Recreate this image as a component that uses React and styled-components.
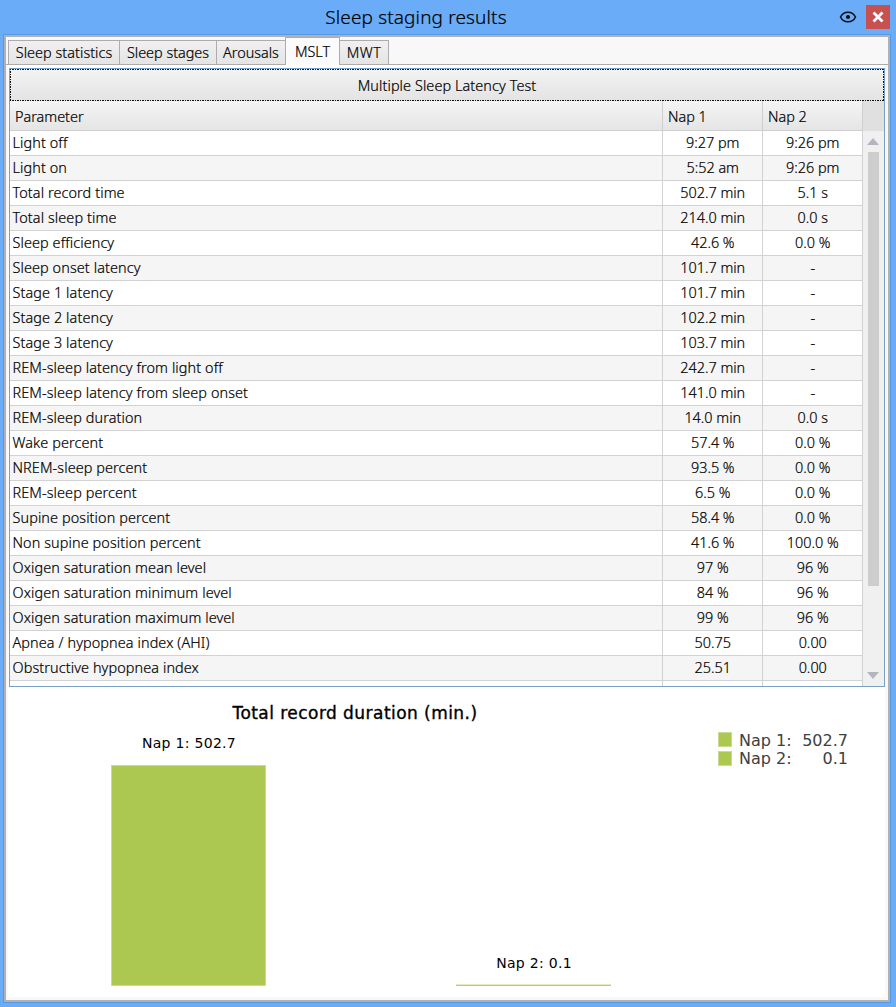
import React from 'react';
import styled, { createGlobalStyle } from 'styled-components';

const Global = createGlobalStyle`
  *, *::before, *::after { box-sizing: border-box; }
  html, body { margin: 0; padding: 0; }
  body { background: #6aacf7; overflow: hidden; }
`;

const Window = styled.div`
  width: 896px;
  height: 1007px;
  display: flex;
  flex-direction: column;
  padding: 0 5px 4px 3px;
  background: #6aacf7;
  color: #000;
  font: 300 14.4px/20px 'Noto Sans', 'Open Sans', sans-serif;
  letter-spacing: 0.13px;
  -webkit-text-stroke: 0.2px currentColor;
  white-space: nowrap;
`;

const TitleBar = styled.header`
  height: 34px;
  flex: none;
  display: flex;
  align-items: center;
`;

const Title = styled.h1`
  flex: 1;
  margin: 0;
  padding-right: 10px;
  text-align: center;
  font-size: 19px;
  font-weight: 300;
  line-height: 34px;
`;

const TitleActions = styled.div`
  display: flex;
  justify-content: flex-end;
  align-items: center;
  gap: 9px;
  padding: 0 1px 1px 0;
`;

const CloseButton = styled.button`
  width: 24px;
  height: 24px;
  padding: 0;
  border: 0;
  display: grid;
  place-items: center;
  background: #c75050;
`;

const Frame = styled.main`
  flex: 1;
  min-height: 0;
  display: flex;
  flex-direction: column;
  border: 1px solid #559ae4;
  box-shadow: inset 0 0 0 2px #b1b1b3;
  padding: 2px;
  background: #f8f8f8;
`;

const TabStrip = styled.nav`
  height: 28px;
  flex: none;
  display: flex;
  align-items: flex-end;
  padding-left: 2px;
  border-bottom: 1px solid #acacac;
`;

const Tab = styled.button`
  width: ${(p) => p.$w}px;
  height: ${(p) => (p.$active ? 29 : 24)}px;
  margin-bottom: ${(p) => (p.$active ? -2 : 0)}px;
  padding: 1px 0 ${(p) => (p.$active ? 2 : 0)}px;
  border: 1px solid #acacac;
  border-bottom: 0;
  border-left-width: ${(p) => (p.$joined ? 0 : 1)}px;
  border-right-width: ${(p) => (p.$open ? 0 : 1)}px;
  background: ${(p) => (p.$active ? '#fbfbfb' : 'linear-gradient(#f0f0f0, #e5e5e5)')};
  color: inherit;
  font: inherit;
  letter-spacing: ${(p) => p.$ls}px;
`;

const Page = styled.section`
  flex: 1;
  min-height: 0;
  display: flex;
  flex-direction: column;
  margin: 0 3px 3px 2px;
  padding-top: 3px;
  background: #fff;
`;

const Grid = styled.div`
  width: 876px;
  height: 619px;
  flex: none;
  margin-left: 1px;
  display: flex;
  flex-direction: column;
  border: 1px solid #7a9fc4;
`;

const dots = (angle) =>
  `repeating-linear-gradient(${angle}, #111 0 1.25px, transparent 1.25px 2.5px)`;

const TestButton = styled.button`
  height: 32px;
  flex: none;
  padding: 2px 0 0;
  border: 0;
  outline: 0;
  background:
    ${dots('90deg')} 0 0 / 100% 1px no-repeat,
    ${dots('90deg')} 0 100% / 100% 1px no-repeat,
    ${dots('180deg')} 0 0 / 1px 100% no-repeat,
    ${dots('180deg')} 100% 0 / 1px 100% no-repeat,
    linear-gradient(#f3f3f3, #e3e3e3);
  color: inherit;
  font: inherit;
  letter-spacing: 0.1px;
`;

const GridBody = styled.div`
  flex: 1;
  min-height: 0;
  display: flex;
`;

const Columns = styled.div`
  width: 853px;
  height: 100%;
  overflow: hidden;
`;

const HeaderRow = styled.div`
  height: 30px;
  display: grid;
  grid-template-columns: 653px 100px 100px;
  border-bottom: 1px solid #cfcfcf;
  background: linear-gradient(#f4f4f4, #e5e5e5);
`;

const HeaderCell = styled.div`
  padding: 6px 0 0 5px;
  border-right: 1px solid #cfcfcf;
  letter-spacing: 0;
`;

const Row = styled.div`
  height: 25px;
  display: grid;
  grid-template-columns: 653px 100px 100px;
  border-bottom: 1px solid #d2d2d2;
  background: ${(p) => (p.$odd ? '#f5f5f5' : '#fff')};
`;

const Cell = styled.div`
  padding: 2px 0 0 ${(p) => (p.$value ? 0.5 : 2.5)}px;
  border-right: 1px solid #d2d2d2;
  text-align: ${(p) => (p.$value ? 'center' : 'left')};
  letter-spacing: ${(p) => (p.$value ? 0 : 0.11)}px;
`;

const ScrollSide = styled.div`
  flex: 1;
  display: flex;
  flex-direction: column;
`;

const ScrollCorner = styled.div`
  height: 30px;
  flex: none;
  background: #e0e0e0;
`;

const ScrollBar = styled.div`
  flex: 1;
  display: flex;
  flex-direction: column;
  align-items: center;
  padding: 7px 1px 7px 0;
  background: #f0f0f0;
`;

const Thumb = styled.div`
  width: 11px;
  height: 434px;
  margin: 7px 0 auto;
  background: #cdcdcd;
`;

const Chart = styled.div`
  flex: 1;
  min-height: 0;
  display: flex;
  justify-content: space-between;
  color: #000;
  font-family: 'DejaVu Sans', sans-serif;
  font-weight: 400;
  letter-spacing: 0;
  -webkit-text-stroke: 0;
`;

const Plot = styled.div`
  width: 693px;
  display: flex;
  flex-direction: column;
  padding: 16px 0 11px;
`;

const ChartTitle = styled.h2`
  margin: 0;
  padding-left: 1px;
  text-align: center;
  font: 400 17px/20px 'DejaVu Sans', sans-serif;
  letter-spacing: 0.45px;
  -webkit-text-stroke: 0.35px #000;
`;

const Bars = styled.div`
  flex: 1;
  display: flex;
  align-items: flex-end;
  gap: 190px;
  padding-left: 103px;
`;

const BarGroup = styled.div`
  width: 155px;
  display: flex;
  flex-direction: column;
  align-items: center;
`;

const BarLabel = styled.span`
  height: ${(p) => (p.$flat ? 31 : 32)}px;
  padding-left: 1px;
  font-size: 14px;
  line-height: 20px;
  letter-spacing: 0.3px;
`;

const Bar = styled.div`
  width: 100%;
  background: #acc850;
  border: 1px solid #cadc91;
  border-color: ${(p) => (p.$flat ? '#e2ecc0 #cadc91 #b9cf6e' : '#cadc91')};
`;

const Legend = styled.div`
  width: 130px;
  margin: 45px 37px 0 0;
  display: flex;
  flex-direction: column;
  gap: 4px;
  color: #404040;
  font-size: 16px;
`;

const LegendRow = styled.div`
  height: 15px;
  display: flex;
  align-items: center;

  &:first-child span { padding-top: 2px; }
`;

const Swatch = styled.i`
  width: 14px;
  height: 15px;
  margin-right: 7px;
  border: 1px solid #cadc91;
  background: #acc850;
`;

const LegendText = styled.span`
  margin-left: ${(p) => (p.$end ? 'auto' : 0)};
`;

const tabs = [
  { name: 'Sleep statistics', w: 112, ls: 0.05 },
  { name: 'Sleep stages', w: 97, joined: true, ls: 0 },
  { name: 'Arousals', w: 68, joined: true, open: true, ls: 0 },
  { name: 'MSLT', w: 55, active: true, ls: 0 },
  { name: 'MWT', w: 49, joined: true, ls: 0.5 },
];

const rows = [
  ['Light off', '9:27 pm', '9:26 pm'],
  ['Light on', '5:52 am', '9:26 pm'],
  ['Total record time', '502.7 min', '5.1 s'],
  ['Total sleep time', '214.0 min', '0.0 s'],
  ['Sleep efficiency', '42.6 %', '0.0 %'],
  ['Sleep onset latency', '101.7 min', '-'],
  ['Stage 1 latency', '101.7 min', '-'],
  ['Stage 2 latency', '102.2 min', '-'],
  ['Stage 3 latency', '103.7 min', '-'],
  ['REM-sleep latency from light off', '242.7 min', '-'],
  ['REM-sleep latency from sleep onset', '141.0 min', '-'],
  ['REM-sleep duration', '14.0 min', '0.0 s'],
  ['Wake percent', '57.4 %', '0.0 %'],
  ['NREM-sleep percent', '93.5 %', '0.0 %'],
  ['REM-sleep percent', '6.5 %', '0.0 %'],
  ['Supine position percent', '58.4 %', '0.0 %'],
  ['Non supine position percent', '41.6 %', '100.0 %'],
  ['Oxigen saturation mean level', '97 %', '96 %'],
  ['Oxigen saturation minimum level', '84 %', '96 %'],
  ['Oxigen saturation maximum level', '99 %', '96 %'],
  ['Apnea / hypopnea index (AHI)', '50.75', '0.00'],
  ['Obstructive hypopnea index', '25.51', '0.00'],
  ['', '', ''],
];

const EyeIcon = () => (
  <svg width="18" height="14" viewBox="0 0 18 14" fill="none" stroke="#0b0f14">
    <path d="M1.5 7C3.1 3.8 5.8 2.2 9 2.2S14.9 3.8 16.5 7C14.9 10.2 12.2 11.8 9 11.8S3.1 10.2 1.5 7Z" strokeWidth="1.6" />
    <circle cx="9" cy="7" r="2.1" fill="#0b0f14" stroke="none" />
  </svg>
);

const CloseIcon = () => (
  <svg width="12" height="12" viewBox="0 0 12 12" stroke="#fff" strokeWidth="2.8">
    <path d="M1.5 1.5 10.5 10.5M10.5 1.5 1.5 10.5" />
  </svg>
);

const Arrow = ({ down }) => (
  <svg width="12" height="7" viewBox="0 0 12 7">
    <path d={down ? 'M0 0H12L6 7Z' : 'M0 7H12L6 0Z'} fill="#b4b5bf" />
  </svg>
);

export default function App() {
  return (
    <>
      <Global />
      <Window>
        <TitleBar>
          <Title>Sleep staging results</Title>
          <TitleActions>
            <EyeIcon />
            <CloseButton aria-label="Close"><CloseIcon /></CloseButton>
          </TitleActions>
        </TitleBar>
        <Frame>
          <TabStrip>
            {tabs.map((t) => (
              <Tab key={t.name} $w={t.w} $ls={t.ls} $joined={t.joined} $open={t.open} $active={t.active}>
                {t.name}
              </Tab>
            ))}
          </TabStrip>
          <Page>
            <Grid>
              <TestButton>Multiple Sleep Latency Test</TestButton>
              <GridBody>
                <Columns>
                  <HeaderRow>
                    <HeaderCell>Parameter</HeaderCell>
                    <HeaderCell>Nap 1</HeaderCell>
                    <HeaderCell>Nap 2</HeaderCell>
                  </HeaderRow>
                  {rows.map(([label, a, b], i) => (
                    <Row key={label} $odd={i % 2 === 1}>
                      <Cell>{label}</Cell>
                      <Cell $value>{a}</Cell>
                      <Cell $value>{b}</Cell>
                    </Row>
                  ))}
                </Columns>
                <ScrollSide>
                  <ScrollCorner />
                  <ScrollBar>
                    <Arrow />
                    <Thumb />
                    <Arrow down />
                  </ScrollBar>
                </ScrollSide>
              </GridBody>
            </Grid>
            <Chart>
              <Plot>
                <ChartTitle>Total record duration (min.)</ChartTitle>
                <Bars>
                  <BarGroup>
                    <BarLabel>Nap 1: 502.7</BarLabel>
                    <Bar style={{ height: 221 }} />
                  </BarGroup>
                  <BarGroup>
                    <BarLabel $flat>Nap 2: 0.1</BarLabel>
                    <Bar $flat style={{ height: 2 }} />
                  </BarGroup>
                </Bars>
              </Plot>
              <Legend>
                <LegendRow><Swatch /><LegendText>Nap 1:</LegendText><LegendText $end>502.7</LegendText></LegendRow>
                <LegendRow><Swatch /><LegendText>Nap 2:</LegendText><LegendText $end>0.1</LegendText></LegendRow>
              </Legend>
            </Chart>
          </Page>
        </Frame>
      </Window>
    </>
  );
}
